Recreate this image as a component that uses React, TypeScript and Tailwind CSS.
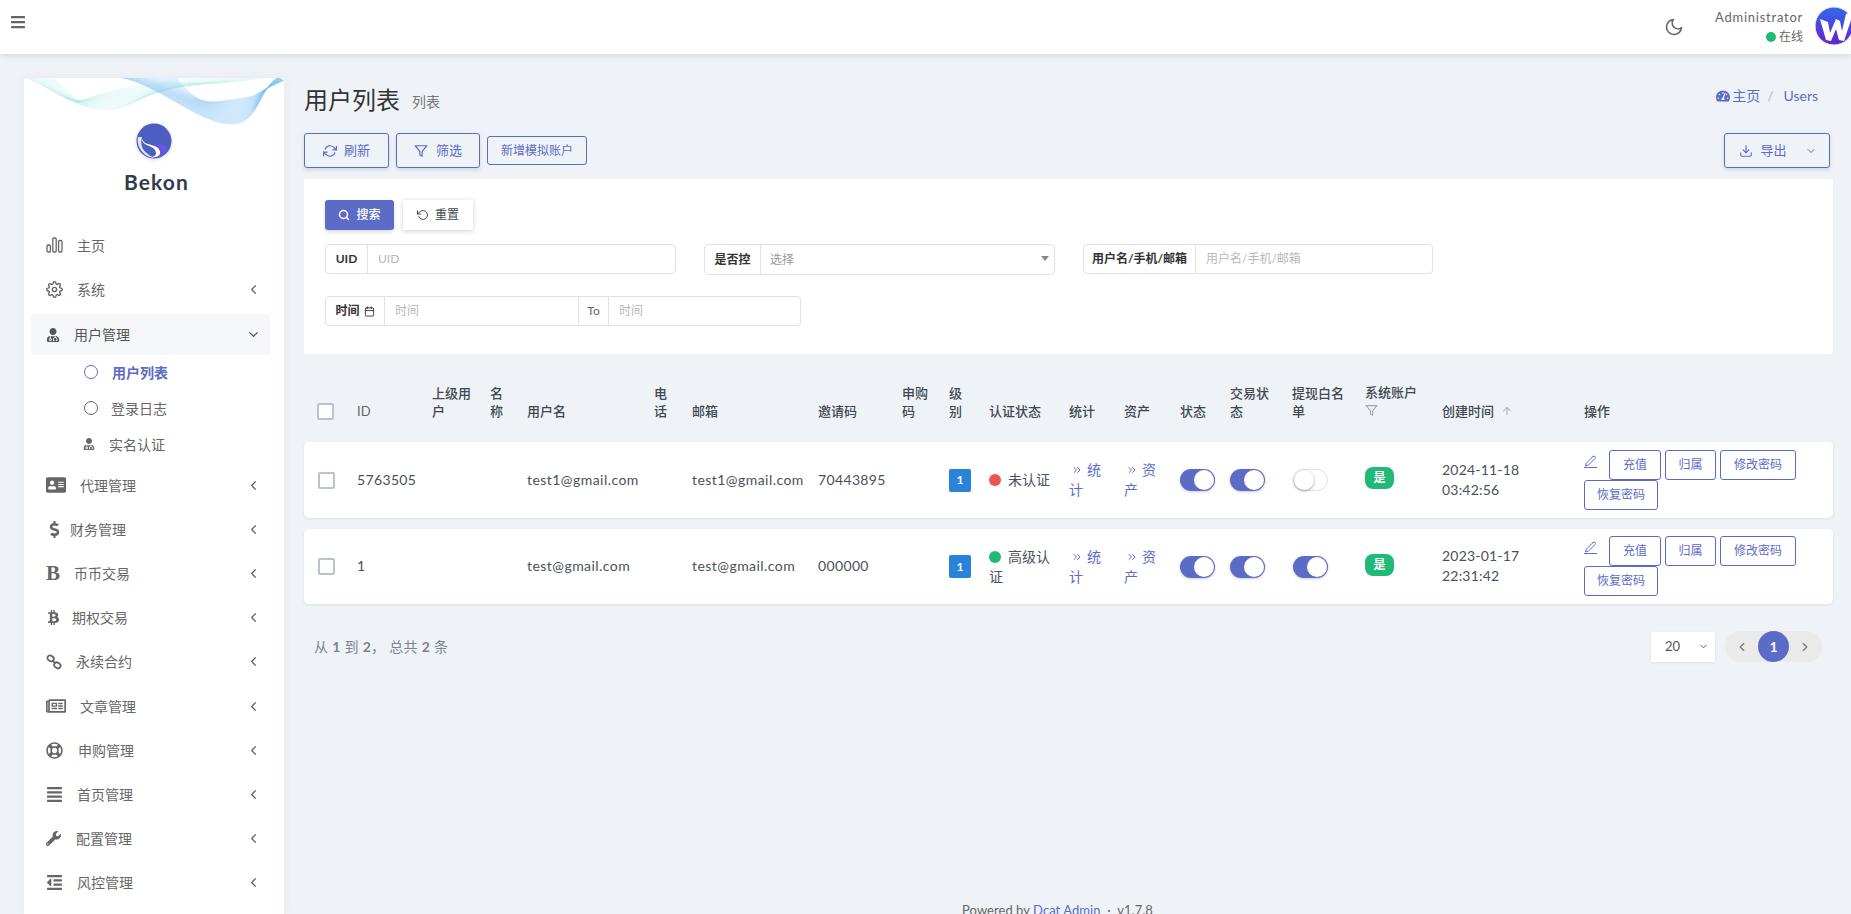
import React from 'react';
import {
  FaAddressCard,
  FaAlignJustify,
  FaBars,
  FaBtc,
  FaDollarSign,
  FaOutdent,
  FaRegLifeRing,
  FaRegNewspaper,
  FaTachometerAlt,
  FaUserMd,
  FaWrench,
} from 'react-icons/fa';
import {
  FiArrowUp,
  FiCalendar,
  FiChevronDown,
  FiChevronLeft,
  FiChevronRight,
  FiChevronsRight,
  FiDownload,
  FiEdit2,
  FiFilter,
  FiMoon,
  FiRefreshCw,
  FiRotateCcw,
  FiSearch,
  FiSettings,
} from 'react-icons/fi';

const FONT = "font-['Lato','Noto_Sans_CJK_SC',sans-serif]";
const ROW_COLS =
  'grid grid-cols-[53px_75px_58px_37px_127px_38px_126px_84px_47px_40px_80px_55px_56px_50px_62px_73px_77px_142px_249px]';

function BarsIcon() {
  return (
    <svg width="17" height="16" viewBox="0 0 17 16" fill="none" stroke="#666" strokeWidth="1.3">
      <rect x="1" y="8" width="3.4" height="7" rx="1.2" />
      <rect x="6.8" y="1" width="3.4" height="14" rx="1.2" />
      <rect x="12.6" y="3.5" width="3.4" height="11.5" rx="1.2" />
    </svg>
  );
}

function ChainIcon() {
  return (
    <svg width="16" height="16" viewBox="0 0 16 16" fill="none" stroke="#666" strokeWidth="1.8">
      <ellipse cx="4.6" cy="4.4" rx="3.4" ry="2.7" transform="rotate(35 4.6 4.4)" />
      <ellipse cx="11.4" cy="11.4" rx="3.4" ry="2.7" transform="rotate(35 11.4 11.4)" />
      <path d="M6.5 6.5 L9.5 9.5" />
    </svg>
  );
}

const MENU = [
  { label: '代理管理', icon: <FaAddressCard size={20} />, box: 'w-[34px]' },
  { label: '财务管理', icon: <FaDollarSign size={17} />, box: 'w-[24px]' },
  { label: '币币交易', icon: <span className="font-['Liberation_Serif',serif] text-[21px] font-bold leading-none">B</span>, box: 'w-[28px]' },
  { label: '期权交易', icon: <FaBtc size={15} />, box: 'w-[26px]' },
  { label: '永续合约', icon: <ChainIcon />, box: 'w-[30px]' },
  { label: '文章管理', icon: <FaRegNewspaper size={20} />, box: 'w-[34px]' },
  { label: '申购管理', icon: <FaRegLifeRing size={17} />, box: 'w-[32px]' },
  { label: '首页管理', icon: <FaAlignJustify size={17} />, box: 'w-[31px]' },
  { label: '配置管理', icon: <FaWrench size={15} />, box: 'w-[30px]' },
  { label: '风控管理', icon: <FaOutdent size={17} />, box: 'w-[31px]' },
];

function Waves() {
  const teal = Array.from({ length: 30 }, (_, i) => {
    const d = i * 1.5;
    return `M${i} ${-1} C ${28 + d} ${10 + d * 0.6}, ${52 - d * 0.4} ${32 - d * 0.2}, ${82 + d * 0.4} ${32 - d * 0.5} S ${124 + d} ${8 + d * 0.1}, ${150 + d * 2.2} ${-1}`;
  });
  const blue = Array.from({ length: 60 }, (_, i) => {
    const d = i * 1;
    return `M${92 + d} ${-1} C ${128 + d * 0.8} ${2 + d * 0.4}, ${172 + d * 0.1} ${44 - d * 0.3}, ${204 + d * 0.1} ${46 - d * 0.42} S ${232 - d * 0.2} ${14 + d * 0.1}, ${254 + d * 0.1} ${-1 + d * 0.06}`;
  });
  return (
    <svg width="260" height="50" viewBox="0 0 260 50" fill="none" className="absolute left-0 top-0">
      {teal.map((d) => (
        <path key={d} d={d} stroke="#a9ece6" strokeWidth="0.4" opacity="0.4" />
      ))}
      {blue.map((d) => (
        <path key={d} d={d} stroke="#8cc8f7" strokeWidth="0.4" opacity="0.5" />
      ))}
    </svg>
  );
}

function Sidebar() {
  return (
    <aside className="relative w-[260px] shrink-0 overflow-hidden rounded-t-[2px] bg-white shadow-[0_0_10px_rgba(0,0,0,0.05)]">
      <Waves />
      <div className="flex flex-col items-center pt-[45px]">
        <svg width="36" height="36" viewBox="0 0 36 36" className="-ml-[1px] drop-shadow-sm">
          <circle cx="18" cy="18" r="17.5" fill="#4c5fc1" />
          <path d="M2 14 C 0 24, 8 34, 18 35 C 10 30, 3 26, 6 14 Z" fill="#dfe6fa" />
          <path d="M6 16 C 6 24, 20 22, 20 30 C 20 33, 17 34, 15 34 C 22 35, 25 32, 24 28 C 22 20, 9 24, 6 16 Z" fill="#fff" />
          <path d="M17 22 C 24 20, 30 21, 32 26 C 30 30, 26 32, 24 33 C 26 27, 22 24, 17 22 Z" fill="#6a55e0" />
        </svg>
        <div className="mt-[10px] ml-[5px] text-[21px] font-bold leading-[26px] tracking-[1.1px] text-[#333c4d]">Bekon</div>
      </div>
      <nav className="mt-[28px] flex flex-col text-[14px] text-[#666]">
        <div className="flex h-[44px] items-center pl-[22px]">
          <span className="flex w-[31px] shrink-0"><BarsIcon /></span>
          主页
        </div>
        <div className="flex h-[44px] items-center pl-[22px]">
          <span className="flex w-[31px] shrink-0"><FiSettings size={17} /></span>
          系统
          <FiChevronLeft size={15} className="ml-auto mr-[23px]" />
        </div>
        <div className="ml-[7px] mr-[14px] mt-[3px] flex h-[41px] items-center rounded-[2px] bg-[#f6f7f9] pl-[15px] text-[#555]">
          <span className="flex w-[28px] shrink-0"><FaUserMd size={14} /></span>
          用户管理
          <FiChevronDown size={15} className="ml-auto mr-[9px]" />
        </div>
        <div className="-mt-[1px] flex h-[36px] items-center pl-[60px] font-bold text-[#5c6bc6]">
          <span className="mr-[14px] h-[14px] w-[14px] rounded-full border-[1.5px] border-[#5c6bc6]" />
          用户列表
        </div>
        <div className="flex h-[36px] items-center pl-[60px]">
          <span className="mr-[13px] h-[14px] w-[14px] rounded-full border-[1.5px] border-[#666]" />
          登录日志
        </div>
        <div className="mb-[1px] flex h-[36px] items-center pl-[59px]">
          <span className="flex w-[26px] shrink-0"><FaUserMd size={12} /></span>
          实名认证
        </div>
        {MENU.map((item) => (
          <div key={item.label} className="flex h-[44.2px] shrink-0 items-center pl-[22px]">
            <span className={`flex shrink-0 ${item.box}`}>{item.icon}</span>
            {item.label}
            <FiChevronLeft size={15} className="ml-auto mr-[23px]" />
          </div>
        ))}
      </nav>
    </aside>
  );
}

function TopBar() {
  return (
    <header className="relative z-10 flex h-[54px] shrink-0 bg-white pl-[10px] text-[#666] shadow-[0_2px_6px_rgba(0,0,0,0.1)]">
      <FaBars size={16} className="mt-[14px]" />
      <div className="ml-auto flex">
        <FiMoon size={20} className="mr-[31px] mt-[17px]" />
        <div className="mr-[12px] flex flex-col items-end pt-[7px] text-[13px] leading-[20px]">
          <span className="tracking-[0.75px]">Administrator</span>
          <span className="flex items-center text-[12px]">
            <i className="mr-[3px] h-[10px] w-[10px] rounded-full bg-[#21b978]" />
            在线
          </span>
        </div>
        <svg width="36" height="40" viewBox="0 0 36 40" className="mt-[6px]">
          <defs>
            <linearGradient id="av" x1="0" y1="0" x2="0" y2="1">
              <stop offset="0" stopColor="#2f6bec" />
              <stop offset="1" stopColor="#6a20cc" />
            </linearGradient>
          </defs>
          <circle cx="19" cy="20" r="19" fill="url(#av)" stroke="#eee" strokeWidth="1" />
          <path d="M5 13 L13 16 L15 27 L21 13 L25 15 L27 25 L31 8 L36 6 L36 14 L29 35 L24 34 L21 23 L16 35 L11 34 Z" fill="#fff" />
        </svg>
      </div>
    </header>
  );
}

function Outline({ children, className = '' }: { children: React.ReactNode; className?: string }) {
  return (
    <button className={`flex items-center justify-center rounded-[3px] border border-[#5c6bc6] text-[#5c6bc6] ${className}`}>
      {children}
    </button>
  );
}

function Field({ label, hint, labelWidth, className = '' }: { label: React.ReactNode; hint: string; labelWidth: string; className?: string }) {
  return (
    <div className={`flex h-[30px] rounded-[4px] border border-[#dde3e8] text-[12px] ${className}`}>
      <span className={`flex shrink-0 items-center justify-center border-r border-[#dde3e8] font-bold text-[#333] ${labelWidth}`}>{label}</span>
      <span className="flex flex-1 items-center pl-[10px] text-[#b5b8bd]">{hint}</span>
    </div>
  );
}

function Filters() {
  return (
    <section className="h-[175px] rounded-[3px] bg-white pl-[21px] pt-[21px]">
      <div className="flex gap-[9px] text-[12px]">
        <button className="flex h-[30px] w-[69px] items-center justify-center gap-[6px] rounded-[3px] bg-[#5c6bc6] font-medium text-white shadow-[0_2px_4px_rgba(0,0,0,0.15)]">
          <FiSearch size={12} strokeWidth={3} />
          搜索
        </button>
        <button className="flex h-[30px] w-[70px] items-center justify-center gap-[6px] bg-white text-[#414750] shadow-[0_1px_5px_rgba(0,0,0,0.2)]">
          <FiRotateCcw size={12} />
          重置
        </button>
      </div>
      <div className="mt-[14px] flex">
        <Field label="UID" hint="UID" labelWidth="w-[42px]" className="w-[351px]" />
        <div className="ml-[28px] flex h-[31px] w-[351px] rounded-[4px] border border-[#dde3e8] text-[12px]">
          <span className="flex w-[56px] shrink-0 items-center justify-center border-r border-[#dde3e8] font-bold text-[#333]">是否控</span>
          <span className="flex flex-1 items-center pl-[9px] text-[#999]">选择</span>
          <span className="mr-[5px] mt-[11px] h-0 w-0 border-x-[4px] border-t-[5px] border-x-transparent border-t-[#888]" />
        </div>
        <Field label="用户名/手机/邮箱" hint="用户名/手机/邮箱" labelWidth="w-[112px]" className="ml-[28px] w-[350px]" />
      </div>
      <div className="mt-[21px] flex h-[30px] w-[476px] rounded-[4px] border border-[#dde3e8] text-[12px] text-[#b5b8bd]">
        <span className="flex w-[59px] items-center justify-center gap-[4px] border-r border-[#dde3e8] font-bold text-[#333]">
          时间 <FiCalendar size={11} />
        </span>
        <span className="flex w-[193px] items-center pl-[10px]">时间</span>
        <span className="flex w-[31px] items-center justify-center border-x border-[#dde3e8] text-[#666]">To</span>
        <span className="flex flex-1 items-center pl-[10px]">时间</span>
      </div>
    </section>
  );
}

function Checkbox() {
  return <span className="h-[17px] w-[17px] rounded-[2px] border-2 border-[#b9c3cd] bg-white" />;
}

function Toggle({ on }: { on: boolean }) {
  if (!on) {
    return (
      <span className="flex h-[22px] w-[35px] items-center rounded-full border border-[#e2e2e2] bg-white">
        <i className="h-[20px] w-[20px] rounded-full bg-white shadow-[0_1px_3px_rgba(0,0,0,0.35)]" />
      </span>
    );
  }
  return (
    <span className="flex h-[22px] w-[35px] items-center justify-end rounded-full bg-[#5c6bc6] pr-[1px] shadow-[0_1px_3px_rgba(0,0,0,0.2)]">
      <i className="h-[20px] w-[20px] rounded-full bg-white" />
    </span>
  );
}

function UserRow({ row }: { row: { id: string; name: string; code: string; dot: string; auth: string; whitelist: boolean; date: string; time: string; height: string; pad: string } }) {
  return (
    <div className={`${ROW_COLS} ${row.height} items-center rounded-[5px] bg-white text-[14px] text-[#4b515a] shadow-[0_1px_3px_rgba(0,0,0,0.08)]`}>
      <div className="flex pl-[14px]"><Checkbox /></div>
      <div className="-mt-[2px] tracking-[0.35px]">{row.id}</div>
      <div />
      <div />
      <div className="-mt-[2px] tracking-[0.45px]">{row.name}</div>
      <div />
      <div className="-mt-[2px] tracking-[0.45px]">{row.name}</div>
      <div className="-mt-[2px] tracking-[0.35px]">{row.code}</div>
      <div />
      <div>
        <span className="flex h-[23px] w-[22px] items-center justify-center rounded-[2px] bg-[#2b82d9] text-[12px] font-bold text-white">1</span>
      </div>
      <div className="pr-[14px] leading-[20px]">
        <i className={`mr-[7px] inline-block h-[12px] w-[12px] rounded-full align-[-1px] ${row.dot}`} />
        {row.auth}
      </div>
      <div className="w-[34px] leading-[20px] text-[#5c6bc6]">
        <FiChevronsRight size={12} className="mr-[4px] ml-[2px] inline align-[-1px]" />统计
      </div>
      <div className="w-[34px] leading-[20px] text-[#5c6bc6]">
        <FiChevronsRight size={12} className="mr-[4px] ml-[2px] inline align-[-1px]" />资产
      </div>
      <div className="flex"><Toggle on /></div>
      <div className="flex"><Toggle on /></div>
      <div className="flex pl-[1px]"><Toggle on={row.whitelist} /></div>
      <div className="-mt-[4px]">
        <span className="flex h-[22px] w-[29px] items-center justify-center rounded-[8px] bg-[#21b978] text-[12px] font-bold text-white">是</span>
      </div>
      <div className="-mt-[1px] leading-[20px] tracking-[0.2px]">
        {row.date}
        <br />
        {row.time}
      </div>
      <div className={`flex flex-wrap content-start self-start text-[12px] ${row.pad}`}>
        <FiEdit2 size={13} className="mr-[12px] mt-[5px] border-b border-[#5c6bc6] text-[#5c6bc6]" />
        <Outline className="h-[30px] w-[52px]">充值</Outline>
        <Outline className="ml-[4px] h-[30px] w-[51px]">归属</Outline>
        <Outline className="ml-[4px] h-[30px] w-[76px]">修改密码</Outline>
        <Outline className="h-[30px] w-[74px]">恢复密码</Outline>
      </div>
    </div>
  );
}

const ROWS = [
  { id: '5763505', name: 'test1@gmail.com', code: '70443895', dot: 'bg-[#ef5350]', auth: '未认证', whitelist: false, date: '2024-11-18', time: '03:42:56', height: 'h-[76px]', pad: 'pt-[8px]' },
  { id: '1', name: 'test@gmail.com', code: '000000', dot: 'bg-[#21b978]', auth: '高级认证', whitelist: true, date: '2023-01-17', time: '22:31:42', height: 'h-[75px]', pad: 'pt-[7px]' },
];

function UserTable() {
  return (
    <section>
      <div className={`${ROW_COLS} mb-[23px] mt-[29px] h-[36px] items-end text-[13px] font-medium leading-[18px] text-[#414750]`}>
        <div className="flex pl-[13px]"><Checkbox /></div>
        <div className="font-normal text-[#666]">ID</div>
        <div className="pr-[15px]">上级用户</div>
        <div className="pr-[15px]">名称</div>
        <div>用户名</div>
        <div className="pr-[15px]">电话</div>
        <div>邮箱</div>
        <div>邀请码</div>
        <div className="pr-[15px]">申购码</div>
        <div className="pr-[15px]">级别</div>
        <div>认证状态</div>
        <div>统计</div>
        <div>资产</div>
        <div>状态</div>
        <div className="pr-[15px]">交易状态</div>
        <div className="pr-[15px]">提现白名单</div>
        <div className="pb-[3px]">
          系统账户
          <FiFilter size={13} className="mt-[3px] text-[#a0a6ad]" />
        </div>
        <div className="flex items-center gap-[7px]">
          创建时间
          <FiArrowUp size={12} className="text-[#a0a6ad]" />
        </div>
        <div>操作</div>
      </div>
      <div className="flex flex-col gap-[11px]">
        {ROWS.map((row) => (
          <UserRow key={row.id} row={row} />
        ))}
      </div>
    </section>
  );
}

export default function App() {
  return (
    <div className={`flex h-screen flex-col overflow-hidden bg-[#eff3f8] ${FONT}`}>
      <TopBar />
      <div className="flex min-h-0 flex-1 pl-[24px] pt-[24px]">
        <Sidebar />
        <main className="flex min-w-0 flex-1 flex-col pl-[20px] pr-[18px]">
          <div className="flex items-start justify-between">
            <div className="flex items-end pt-[7px]">
              <h1 className="text-[24px] leading-[30px] text-[#333]">用户列表</h1>
              <span className="mb-[3px] ml-[12px] text-[14px] text-[#777]">列表</span>
            </div>
            <div className="mr-[15px] mt-[7px] flex items-center text-[14px] text-[#5c6bc6]">
              <FaTachometerAlt size={14} className="mr-[2px]" />
              主页
              <span className="mx-[7px] text-[#b5b8bd]">/</span>
              <span className="ml-[3px]">Users</span>
            </div>
          </div>
          <div className="mt-[18px] flex items-center text-[13px]">
            <Outline className="h-[35px] w-[85px] gap-[7px] shadow-[0_2px_4px_rgba(0,0,0,0.12)]">
              <FiRefreshCw size={14} />
              刷新
            </Outline>
            <Outline className="ml-[7px] h-[35px] w-[84px] gap-[8px] shadow-[0_2px_4px_rgba(0,0,0,0.12)]">
              <FiFilter size={14} />
              筛选
            </Outline>
            <Outline className="ml-[7px] h-[29px] w-[100px] text-[12px]">新增模拟账户</Outline>
            <Outline className="ml-auto mr-[3px] h-[35px] w-[106px] gap-[7px] pl-[2px] shadow-[0_2px_4px_rgba(0,0,0,0.12)]">
              <FiDownload size={14} />
              导出
              <FiChevronDown size={12} className="ml-[11px]" />
            </Outline>
          </div>
          <div className="mt-[11px]"><Filters /></div>
          <UserTable />
          <div className="mt-[27px] flex h-[31px] items-center text-[14px] text-[#7b8490]">
            <span className="ml-[10px] tracking-[0.3px]">
              从 <b>1</b> 到 <b>2</b>， 总共 <b>2</b> 条
            </span>
            <div className="ml-auto flex h-[30px] w-[64px] items-center justify-between bg-white pl-[14px] pr-[6px] text-[13px] text-[#555] shadow-[0_1px_3px_rgba(0,0,0,0.08)]">
              20
              <FiChevronDown size={11} />
            </div>
            <div className="ml-[10px] mr-[11px] flex h-[31px] w-[97px] items-center justify-between rounded-full bg-[#eaeaea] px-[10px] text-[#777]">
              <FiChevronLeft size={14} />
              <span className="flex h-[31px] w-[31px] items-center justify-center rounded-full bg-[#5c6bc6] text-[14px] font-bold text-white">1</span>
              <FiChevronRight size={14} />
            </div>
          </div>
          <footer className="-mb-[5px] mt-auto pr-[22px] text-center text-[13px] leading-[18px] tracking-[0.05px] text-[#666]">
            Powered by <span className="text-[#5c6bc6]">Dcat Admin</span> &nbsp;·&nbsp; v1.7.8
          </footer>
        </main>
      </div>
    </div>
  );
}
